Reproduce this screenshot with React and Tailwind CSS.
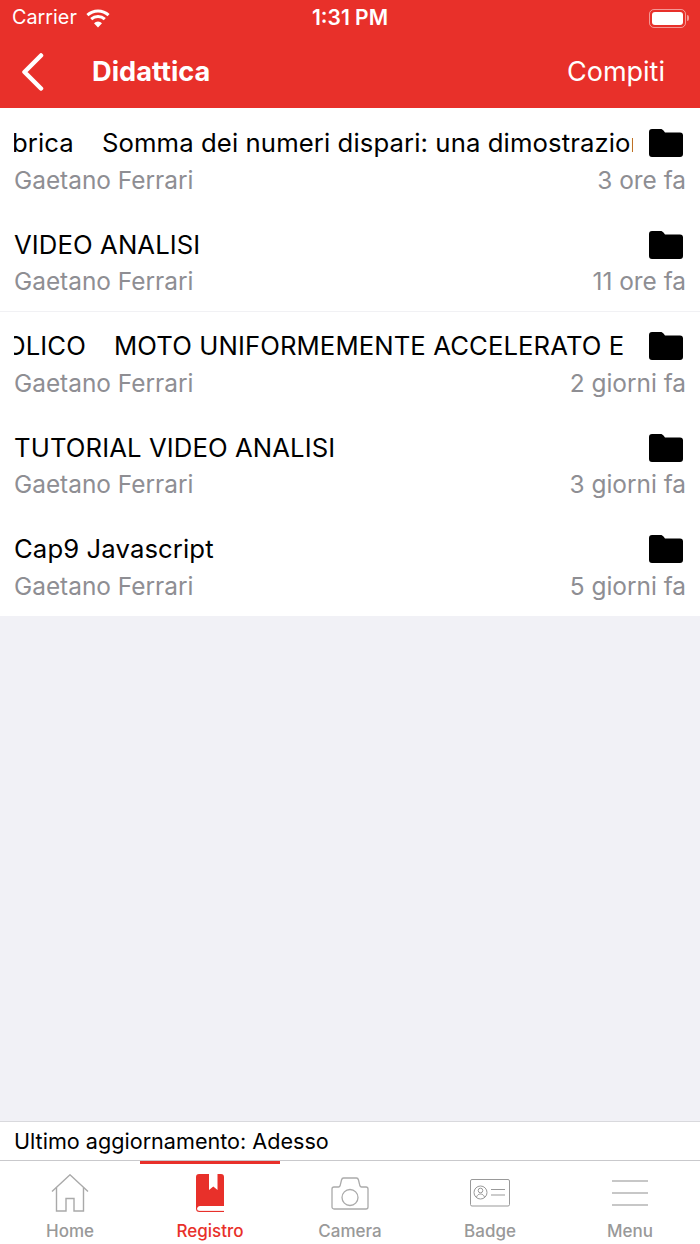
import React from 'react';

const rows = [
    { title: 'brica', second: 'Somma dei numeri dispari: una dimostrazione', gap: 'ml-[28px]', width: 'w-[619px]', shift: '-ml-[2px]', time: '3 ore fa' },
    { title: 'VIDEO ANALISI', time: '11 ore fa' },
    { title: 'OLICO', second: 'MOTO UNIFORMEMENTE ACCELERATO E CADUTA', gap: 'ml-[28px]', width: 'w-[611px]', shift: '-ml-[8px]', time: '2 giorni fa', line: true },
    { title: 'TUTORIAL VIDEO ANALISI', time: '3 giorni fa' },
    { title: 'Cap9 Javascript', time: '5 giorni fa' },
];

const FolderIcon = () => (
    <svg width="34" height="28" viewBox="0 0 34 28" className="shrink-0 mr-[3px]">
        <path d="M0 3a3 3 0 0 1 3-3h8.500c1.400 0 2.200.6 3 1.600L16 3.600h15a3 3 0 0 1 3 3V25a3 3 0 0 1-3 3H3a3 3 0 0 1-3-3z" fill="#000" />
    </svg>
);

const WifiIcon = () => (
    <svg width="26" height="19" viewBox="0 0 26 19" fill="none" stroke="#fff" strokeWidth="3">
        <path d="M2.400 6.200A15.500 15.500 0 0 1 23.600 6.200" />
        <path d="M6.200 10.200A10 10 0 0 1 19.800 10.200" />
        <path d="M13 18.500 9 14.200A5.800 5.800 0 0 1 17 14.200Z" fill="#fff" stroke="none" />
    </svg>
);

const BatteryIcon = () => (
    <div className="flex items-center">
        <div className="w-[37px] h-[19px] rounded-[5px] border border-white/50 p-[2px]">
            <div className="w-full h-full rounded-[3px] bg-white"></div>
        </div>
        <div className="w-[2px] h-[6px] ml-[1px] rounded-r-[2px] bg-white/50"></div>
    </div>
);

const HomeIcon = () => (
    <svg width="38" height="38" viewBox="0 0 38 38" fill="none" stroke="#a9a9a9" strokeWidth="1.400">
        <path d="M1 17.500 19 .8l18 16.700" />
        <path d="M5.500 13.500V37H15V24.500h8V37h9.500V13.500" />
    </svg>
);

const BookIcon = () => (
    <svg width="28" height="38" viewBox="0 0 28 38">
        <path d="M3 0h22a3 3 0 0 1 3 3v29H4a2 2 0 0 0 0 4.500h24V38H3.500A3.500 3.500 0 0 1 0 34.500V3a3 3 0 0 1 3-3z" fill="#e8302a" />
        <path d="M13 0h8.500v16l-4.200-3.500L13 16z" fill="#fff" />
        <path d="M3 32.800h25v3.900H3a1.950 1.950 0 0 1 0-3.900z" fill="#fff" />
    </svg>
);

const CameraIcon = () => (
    <svg width="38" height="33" viewBox="0 0 38 33" fill="none" stroke="#aaaaaa" strokeWidth="1.300">
        <path d="M3 10h4.500c.8 0 1.300-.4 1.600-1.200L10.500 3c.3-1.200 1-2 2-2h13c1 0 1.700.8 2 2l1.400 5.800c.3.8.8 1.200 1.600 1.200H35a2 2 0 0 1 2 2v18a2 2 0 0 1-2 2H3a2 2 0 0 1-2-2V12a2 2 0 0 1 2-2z" />
        <circle cx="19" cy="20.500" r="8" />
    </svg>
);

const BadgeIcon = () => (
    <svg width="40" height="28" viewBox="0 0 40 28" fill="none" stroke="#999999" strokeWidth="1">
        <rect x="0.500" y="0.500" width="39" height="26.500" rx="1.500" />
        <circle cx="10.500" cy="13.500" r="6.500" />
        <circle cx="10.500" cy="11.500" r="2.300" />
        <path d="M6.500 18c.8-2 2.200-3 4-3s3.200 1 4 3" />
        <path d="M21 10.500h14M21 16h14" />
    </svg>
);

const MenuIcon = () => (
    <svg width="36" height="26" viewBox="0 0 36 26" stroke="#b5b5b5" strokeWidth="1.500">
        <path d="M0 1h36M0 13h36M0 25h36" />
    </svg>
);

const tabs = [
    { label: 'Home', icon: <HomeIcon /> },
    { label: 'Registro', icon: <BookIcon />, active: true },
    { label: 'Camera', icon: <CameraIcon /> },
    { label: 'Badge', icon: <BadgeIcon /> },
    { label: 'Menu', icon: <MenuIcon /> },
];

const App = () => {
    return (
        <div className="w-[700px] h-[1244px] flex flex-col overflow-hidden bg-[#f1f1f6] font-['Inter',sans-serif]">
            {/* Barra rossa con status bar e titolo */}
            <header className="h-[108px] shrink-0 bg-[#e8302a] text-white">
                <div className="h-[36px] px-3 flex items-center relative">
                    <span className="text-[19.800px] font-normal">Carrier</span>
                    <span className="ml-[8px]"><WifiIcon /></span>
                    <span className="absolute left-0 right-0 text-center text-[21px] font-semibold">1:31 PM</span>
                    <span className="ml-auto -mr-[1px]"><BatteryIcon /></span>
                </div>
                <div className="h-[72px] flex items-center">
                    <svg width="24" height="38" viewBox="0 0 24 38" fill="none" stroke="#fff" strokeWidth="4.500" strokeLinecap="round" strokeLinejoin="round" className="ml-[21px]">
                        <path d="M20 2.500 3.500 19 20 35.500" />
                    </svg>
                    <h1 className="ml-[47px] text-[27.200px] font-bold">Didattica</h1>
                    <span className="ml-auto mr-[35px] text-[27px]">Compiti</span>
                </div>
            </header>

            {/* Lista dei materiali */}
            <main className="flex-1">
                <div className="bg-white">
                    {rows.map((row) => (
                        <div key={row.title} className={`h-[101.500px] pl-[14px] pr-[14px] ${row.line ? 'border-t border-[#f1f1f4] pt-[16px]' : 'pt-[17px]'}`}>
                            <div className="h-[36px] flex items-center justify-between">
                                <div className={`${row.width || ''} overflow-hidden whitespace-nowrap text-[25.700px] leading-[36px] tracking-[0.1px] text-black`}>
                                    <span className={row.shift || ''}>{row.title}</span>
                                    {row.second && <span className={row.gap}>{row.second}</span>}
                                </div>
                                <FolderIcon />
                            </div>
                            <div className="h-[38px] flex items-center justify-between text-[24.400px] text-[#8e8e93]">
                                <span>Gaetano Ferrari</span>
                                <span>{row.time}</span>
                            </div>
                        </div>
                    ))}
                </div>
            </main>

            {/* Ultimo aggiornamento */}
            <div className="h-[39px] shrink-0 bg-white border-t border-[#d9d9dd] pl-[14px] pt-[1px] flex items-center text-[21.600px] text-black">
                Ultimo aggiornamento: Adesso
            </div>

            {/* Tab bar */}
            <nav className="h-[84px] shrink-0 bg-white border-t border-[#c9c9cc] flex">
                {tabs.map((tab) => (
                    <div key={tab.label} className={`w-[140px] flex flex-col items-center border-t-[3px] ${tab.active ? 'border-[#e8302a]' : 'border-transparent'}`}>
                        <div className="h-[58px] flex items-center justify-center">{tab.icon}</div>
                        <span className={`text-[17px] leading-[18px] font-medium ${tab.active ? 'text-[#e8302a]' : 'text-[#999999]'}`}>{tab.label}</span>
                    </div>
                ))}
            </nav>
        </div>
    );
};

export default App;
